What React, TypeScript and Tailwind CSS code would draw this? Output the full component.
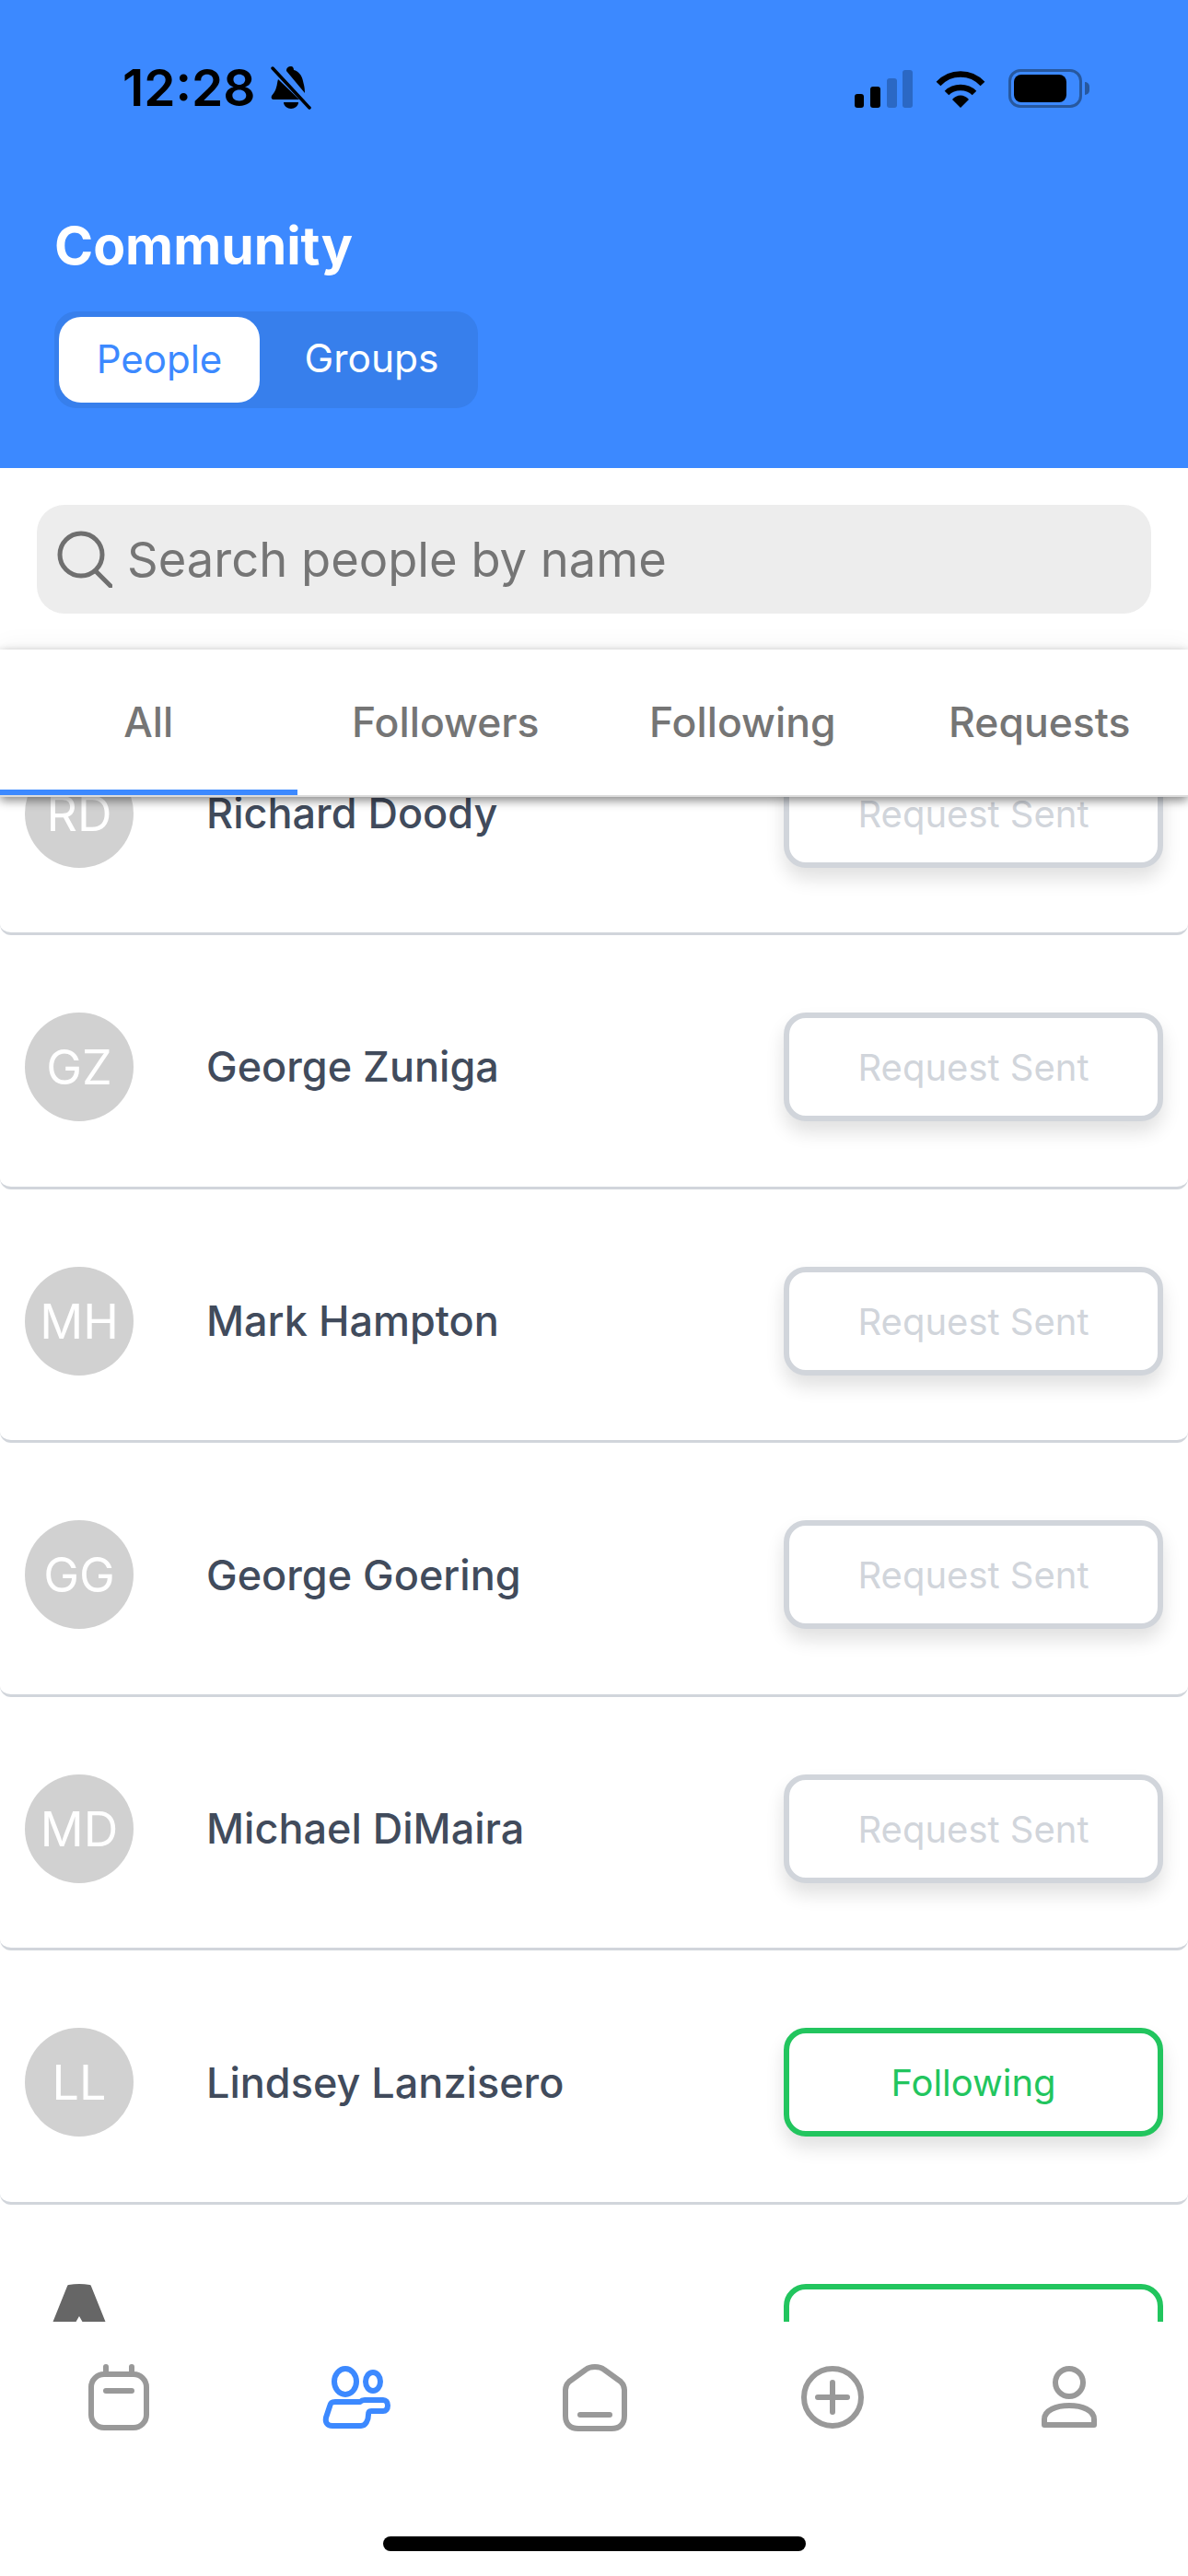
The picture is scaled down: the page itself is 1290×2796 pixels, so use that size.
const rows = [
  { initials: 'RD', name: 'Richard Doody', status: 'Request Sent' },
  { initials: 'GZ', name: 'George Zuniga', status: 'Request Sent' },
  { initials: 'MH', name: 'Mark Hampton', status: 'Request Sent' },
  { initials: 'GG', name: 'George Goering', status: 'Request Sent' },
  { initials: 'MD', name: 'Michael DiMaira', status: 'Request Sent' },
  { initials: 'LL', name: 'Lindsey Lanzisero', status: 'Following' },
];

function StatusBar() {
  return (
    <div className="flex h-[194px] items-start justify-between pl-[133px] pr-[107px] pt-[66px]">
      <div className="flex items-center gap-[16px]">
        <span className="text-[55px] leading-[58px] font-semibold text-black">12:28</span>
        <svg width="44" height="48" viewBox="0 0 44 48" fill="#000">
          <path d="M22 1c-3 0-5 2-5 4v1l20 24c0-6-1-9-2-13-1-6-5-11-10-12 0-2-1-4-3-4Z" />
          <path d="M8 15c-1 3-1 6-2 9-1 4-3 6-5 9-1 2 0 4 2 4h28Z" />
          <path d="M14 40h16c0 4-4 7-8 7s-8-3-8-7Z" />
          <path d="M2 3 42 46" stroke="#000" strokeWidth="3.5" strokeLinecap="round" />
          <path d="M5 0 44 43" stroke="#3c89ff" strokeWidth="3" />
        </svg>
      </div>
      <div className="mt-[9px] flex items-center gap-[25px]">
        <svg width="63" height="41" viewBox="0 0 63 41">
          <rect x="0" y="26" width="10" height="15" rx="3" fill="#000" />
          <rect x="17" y="18" width="11" height="23" rx="3" fill="#000" />
          <rect x="35" y="9" width="11" height="32" rx="3" fill="#2b68c4" />
          <rect x="52" y="0" width="11" height="41" rx="3" fill="#2b68c4" />
        </svg>
        <svg width="54" height="41" viewBox="0 0 54 41" fill="none" stroke="#000" strokeWidth="6.5">
          <path d="M3 15C16 1 38 1 51 15" />
          <path d="M12 25C20 17 34 17 42 25" />
          <path d="M18 32 27 41 36 32C31 26 23 26 18 32Z" fill="#000" stroke="none" />
        </svg>
        <div className="flex items-center gap-[3px]">
          <div className="h-[42px] w-[80px] rounded-[13px] border-[3px] border-[#27589f] p-[3px]">
            <div className="h-full w-[57px] rounded-[8px] bg-black" />
          </div>
          <div className="h-[14px] w-[5px] rounded-r-full bg-[#27589f]" />
        </div>
      </div>
    </div>
  );
}

function Header() {
  return (
    <header className="h-[508px] shrink-0 bg-[#3c89ff]">
      <StatusBar />
      <h1 className="ml-[59px] mt-[39px] text-[57px] leading-[68px] font-bold text-white">Community</h1>
      <div className="ml-[59px] mt-[37px] flex h-[105px] w-[460px] items-center rounded-[24px] bg-[#377fec] pl-[5px]">
        <div className="flex h-[93px] w-[218px] items-center justify-center rounded-[24px] bg-white pb-[3px] text-[42px] text-[#3c89ff]">
          People
        </div>
        <div className="flex h-[93px] flex-1 items-center justify-center pb-[3px] pl-[6px] text-[42.5px] text-white">
          Groups
        </div>
      </div>
    </header>
  );
}

function SearchBar() {
  return (
    <div className="shrink-0 px-[40px] pt-[40px] pb-[39px]">
      <div className="flex h-[118px] items-center rounded-[30px] bg-[#ededed] pl-[22px]">
        <svg width="60" height="62" viewBox="0 0 60 62" fill="none" stroke="#6f6f6f" strokeWidth="5">
          <circle cx="26" cy="26" r="23" />
          <path d="M42 44 58 60" strokeLinecap="round" />
        </svg>
        <span className="ml-[16px] text-[52.5px] text-[#757575]">Search people by name</span>
      </div>
    </div>
  );
}

function Tabs() {
  const tabs = ['All', 'Followers', 'Following', 'Requests'];
  return (
    <div className="relative z-10 grid h-[160px] shrink-0 grid-cols-4 border-b-[2px] border-[#dcdcdc] bg-white shadow-[0_4px_10px_rgba(0,0,0,0.45),0_-6px_24px_rgba(0,0,0,0.04)]">
      {tabs.map((tab, i) => (
        <div
          key={tab}
          className={`flex items-center justify-center border-b-[6px] pt-[6px] text-[44.5px] font-medium text-[#757575] ${
            i === 0 ? 'border-[#3c89ff]' : 'border-transparent'
          }`}
        >
          {tab}
        </div>
      ))}
    </div>
  );
}

function Row({ initials, name, status }: { initials: string; name: string; status: string }) {
  const following = status === 'Following';
  return (
    <div className="flex h-[261px] shrink-0 items-center rounded-[12px] border-b-[3px] border-[#d1d5db] bg-white pb-[1px] pl-[27px] pr-[27px]">
      <div className="flex size-[118px] shrink-0 items-center justify-center rounded-full bg-[#d1d1d1] pt-[2px] text-[52px] text-white">
        {initials}
      </div>
      <div className="ml-[79px] flex-1 text-[45px] font-medium text-[#414b5c]">{name}</div>
      <div
        className={`flex h-[118px] w-[412px] items-center justify-center rounded-[24px] border-[6px] bg-white pt-[2px] text-[40px] shadow-[0_12px_20px_rgba(0,0,0,0.12)] ${
          following ? 'border-[#22c55e] text-[#22c55e]' : 'border-[#d1d5db] text-[#d1d5db]'
        }`}
      >
        {status}
      </div>
    </div>
  );
}

function PeopleList() {
  return (
    <div className="min-h-0 flex-1 overflow-hidden">
      <div className="-mt-[111px] flex flex-col gap-[14.6px]">
        {rows.map((row) => (
          <Row key={row.initials} {...row} />
        ))}
        <div className="flex h-[261px] shrink-0 items-center rounded-[12px] bg-white pb-[1px] pl-[27px] pr-[27px]">
          <div className="flex size-[118px] shrink-0 items-center justify-center overflow-hidden rounded-full bg-white">
            <svg width="118" height="118" viewBox="0 0 118 118" fill="#666">
              <path d="M47 0H71L108 92H92L59 35 26 92H10Z" />
            </svg>
          </div>
          <div className="ml-[79px] flex-1 text-[45px] font-medium text-[#414b5c]">Anna Rosenthal</div>
          <div className="flex h-[118px] w-[412px] items-center justify-center rounded-[24px] border-[6px] border-[#22c55e] bg-white pt-[2px] text-[40px] text-[#22c55e]">
            Following
          </div>
        </div>
      </div>
    </div>
  );
}

function BottomNav() {
  const stroke = { fill: 'none', stroke: '#999', strokeWidth: 6, strokeLinecap: 'round' as const, strokeLinejoin: 'round' as const };
  return (
    <nav className="h-[276px] shrink-0 bg-white">
      <div className="grid h-[233px] grid-cols-5 pt-[46px]">
        <div className="flex justify-center">
          <svg width="72" height="72" viewBox="0 0 72 72" {...stroke}>
            <rect x="6" y="11" width="60" height="58" rx="14" />
            <path d="M22 3v8M50 3v8M22 29h28" />
          </svg>
        </div>
        <div className="flex justify-center">
          <svg width="78" height="72" viewBox="0 0 78 72" {...stroke} stroke="#3c89ff">
            <ellipse cx="27" cy="19" rx="12" ry="14" />
            <ellipse cx="57" cy="19" rx="8" ry="10" />
            <path d="M10 46c1-4 2-5 6-5h27c2-2 3-2 5-2h20c3 0 5 2 5 6s-2 6-5 6H55c-3 0-3 2-3 4 0 6-3 12-8 12H13c-6 0-8-4-7-9Z" />
          </svg>
        </div>
        <div className="flex justify-center pl-[2px]">
          <svg width="76" height="76" viewBox="0 0 76 76" {...stroke}>
            <path d="M6 28c0-4 1-6 4-9L28 6c5-4 15-4 20 0l18 13c3 3 4 5 4 9v28c0 9-5 14-14 14H20C11 70 6 65 6 56Z" />
            <path d="M22 55h32" />
          </svg>
        </div>
        <div className="flex justify-center pl-[2px]">
          <svg width="72" height="72" viewBox="0 0 72 72" {...stroke}>
            <circle cx="36" cy="36" r="31" />
            <path d="M36 20v32M20 36h32" />
          </svg>
        </div>
        <div className="flex justify-center">
          <svg width="62" height="72" viewBox="0 0 62 72" {...stroke}>
            <circle cx="31" cy="20" r="15" />
            <path d="M4 66V60c0-10 13-15 27-15s27 5 27 15v6Z" />
          </svg>
        </div>
      </div>
      <div className="mx-auto h-[16px] w-[459px] rounded-full bg-black" />
    </nav>
  );
}

export default function App() {
  return (
    <div className="flex h-[2796px] w-[1290px] flex-col overflow-hidden bg-white font-['Inter',sans-serif]">
      <Header />
      <SearchBar />
      <Tabs />
      <PeopleList />
      <BottomNav />
    </div>
  );
}
